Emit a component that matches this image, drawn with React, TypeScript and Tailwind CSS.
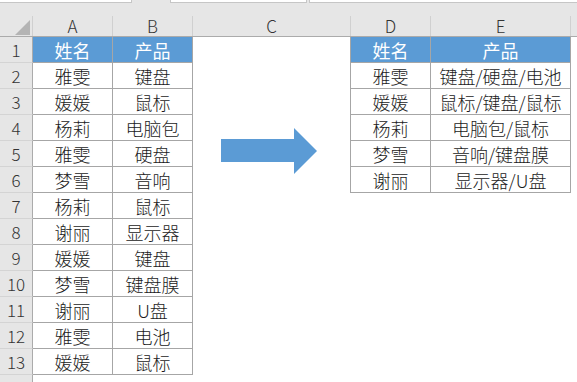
import React from 'react';

const leftRows: [string, string][] = [
  ['姓名', '产品'],
  ['雅雯', '键盘'],
  ['媛媛', '鼠标'],
  ['杨莉', '电脑包'],
  ['雅雯', '硬盘'],
  ['梦雪', '音响'],
  ['杨莉', '鼠标'],
  ['谢丽', '显示器'],
  ['媛媛', '键盘'],
  ['梦雪', '键盘膜'],
  ['谢丽', 'U盘'],
  ['雅雯', '电池'],
  ['媛媛', '鼠标'],
];

const rightRows: [string, string][] = [
  ['姓名', '产品'],
  ['雅雯', '键盘/硬盘/电池'],
  ['媛媛', '鼠标/键盘/鼠标'],
  ['杨莉', '电脑包/鼠标'],
  ['梦雪', '音响/键盘膜'],
  ['谢丽', '显示器/U盘'],
];

const font = { fontFamily: "'Noto Sans CJK SC', 'Noto Sans', sans-serif" };

const Cell: React.FC<{ w: string; head?: boolean; boxed?: boolean; children?: React.ReactNode }> = ({ w, head, boxed, children }) => (
  <div
    className={`${w} h-full shrink-0 flex items-center justify-center text-[18px] leading-none ${
      boxed ? 'border-r border-b border-[#a6a6a6]' : ''
    } ${head ? 'bg-[#5b9bd5] text-white font-normal' : 'text-[#1a1a1a] font-light'}`}
  >
    {children}
  </div>
);

const ColHead: React.FC<{ w: string; label?: string }> = ({ w, label }) => (
  <div className={`${w} h-full shrink-0 flex items-center justify-center border-r border-[#d0d0d0] text-[17px] font-light text-[#333]`}>
    {label}
  </div>
);

export default function App() {
  return (
    <div className="relative w-[577px] h-[382px] overflow-hidden bg-white select-none" style={font}>
      {/* formula bar remnants */}
      <div className="flex h-[3px] bg-[#e6e6e6]">
        <div className="w-[132px] bg-white border-r border-b border-[#c6c6c6]" />
        <div className="w-[38px]" />
        <div className="w-[137px] bg-white border-x border-b border-[#c6c6c6]" />
        <div className="w-[2px]" />
        <div className="flex-1 bg-white border-l border-b border-[#c6c6c6]" />
      </div>
      <div className="h-[13px] bg-[#e6e6e6]" />

      {/* column headers */}
      <div className="flex h-[21px] bg-[#e6e6e6] border-b border-[#ababab]">
        <div className="w-[33px] h-full shrink-0 border-r border-[#d0d0d0] flex items-end justify-end pr-[2px] pb-[1px]">
          <svg width="15" height="15" viewBox="0 0 15 15">
            <polygon points="15,0 15,15 0,15" fill="#b4b4b4" />
          </svg>
        </div>
        <ColHead w="w-[80px]" label="A" />
        <ColHead w="w-[80px]" label="B" />
        <ColHead w="w-[158px]" label="C" />
        <ColHead w="w-[80px]" label="D" />
        <ColHead w="w-[140px]" label="E" />
        <div className="flex-1" />
      </div>

      {/* body rows */}
      {leftRows.map((row, i) => {
        const right = rightRows[i];
        return (
          <div key={i} className="flex h-[26px]">
            <div className="w-[33px] h-full shrink-0 bg-[#e6e6e6] border-r border-b border-r-[#ababab] border-b-[#d4d4d4] flex items-center justify-center text-[17px] font-light text-[#333]">
              {i + 1}
            </div>
            <Cell w="w-[80px]" head={i === 0} boxed>
              {row[0]}
            </Cell>
            <Cell w="w-[80px]" head={i === 0} boxed>
              {row[1]}
            </Cell>
            <div className={`w-[158px] h-full shrink-0 ${right ? 'border-r border-[#a6a6a6]' : ''}`} />
            {right ? (
              <>
                <Cell w="w-[80px]" head={i === 0} boxed>
                  {right[0]}
                </Cell>
                <Cell w="w-[140px]" head={i === 0} boxed>
                  {right[1]}
                </Cell>
              </>
            ) : (
              <div className="w-[220px] shrink-0" />
            )}
            <div className="flex-1" />
          </div>
        );
      })}
      <div className="flex h-[7px]">
        <div className="w-[33px] h-full bg-[#e6e6e6] border-r border-[#ababab]" />
      </div>

      {/* arrow shape floating over the sheet */}
      <svg className="absolute left-[221px] top-[128px]" width="96" height="46" viewBox="0 0 96 46">
        <polygon points="0,11 73,11 73,0 96,23 73,46 73,34 0,34" fill="#5b9bd5" />
      </svg>
    </div>
  );
}
